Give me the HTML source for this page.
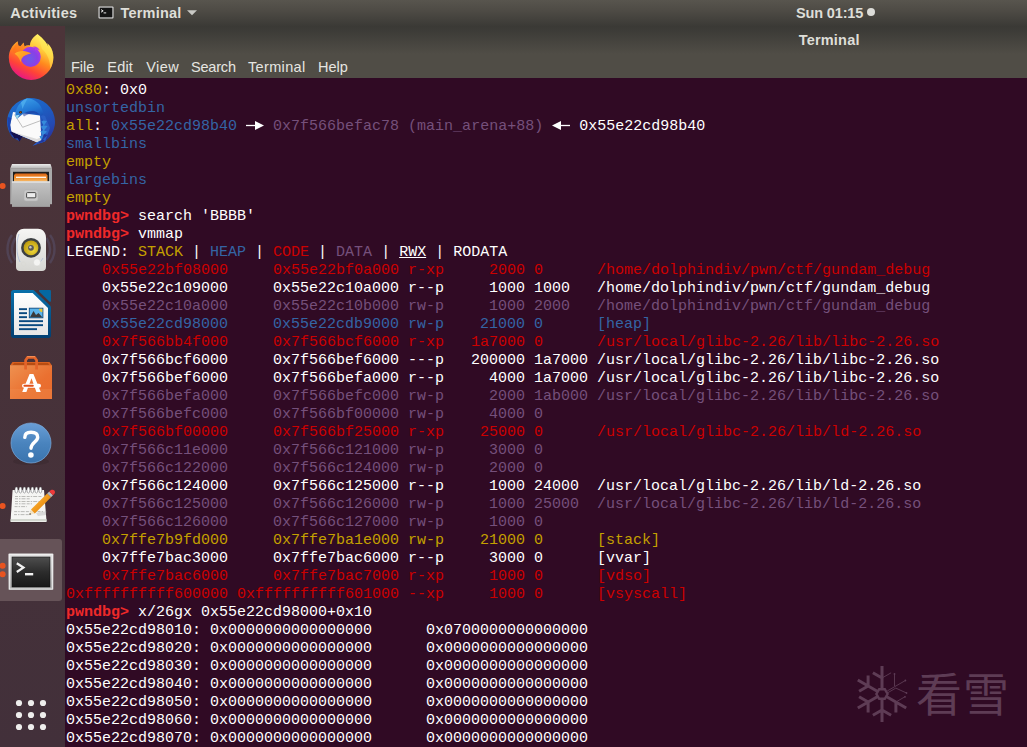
<!DOCTYPE html>
<html lang="en">
<head>
<meta charset="utf-8">
<title>Terminal</title>
<style>
*{box-sizing:border-box;margin:0;padding:0}
html,body{width:1027px;height:747px;overflow:hidden;background:#300a24}
body{position:relative;font-family:"Liberation Sans",sans-serif;color:#eeeeec}
#topbar{position:absolute;left:0;top:0;width:1027px;height:26px;background:linear-gradient(#58554e 0,#4e4b45 40%,#3b3a36 100%);z-index:5}
#topbar span{position:absolute;top:4px;font-weight:bold;font-size:14.5px;line-height:18px;color:#deded8;white-space:nowrap}
#dock{position:absolute;left:0;top:26px;width:65px;height:721px;background:linear-gradient(#4c3439,#42303a);z-index:4;overflow:hidden}
#header{position:absolute;left:65px;top:26px;width:962px;height:52px;background:linear-gradient(#3a3935 0,#3c3b37 4px,#504d46 28px,#504d46 100%)}
#title{position:absolute;left:733.7px;top:5px;letter-spacing:.2px;font-weight:bold;font-size:14.5px;line-height:18px;color:#deded8;white-space:nowrap}
#menu{position:absolute;left:0;top:31px;height:20px;font-size:14.5px;line-height:20px;color:#e6e6e1;white-space:nowrap}
#menu span{position:absolute;top:0}
#term{position:absolute;left:66px;top:82px;width:961px;height:665px;font-family:"Liberation Mono","DejaVu Sans Mono",monospace;font-size:15px;line-height:18px;color:#fff;overflow:hidden}
#term div{height:18px;white-space:pre}
.y{color:#c4a000}.b{color:#3465a4}.p{color:#75507b}.r{color:#cc0000}.w{color:#fff}
.pr{color:#ef2929;font-weight:bold}
.u{text-decoration:underline}
.ar{display:inline-block;width:18px;height:18px;vertical-align:top;position:relative;overflow:hidden}
#wmt{position:absolute;left:916px;top:664.8px;font-family:"Liberation Sans","Noto Sans CJK SC",sans-serif;font-weight:400;font-size:46px;line-height:60px;color:#5e3c55;letter-spacing:1px;white-space:nowrap}
</style>
</head>
<body>
<div id="topbar">
<span id="tA" style="left:10.3px;letter-spacing:.25px">Activities</span>
<svg style="position:absolute;left:98px;top:6px" width="16" height="13" viewBox="0 0 16 13"><rect x=".5" y=".5" width="15" height="12" rx="1" fill="#e2e2e2"/><rect x="1.6" y="1.6" width="12.8" height="9.8" fill="#141414"/><path d="M3 3.6l2.2 1.3L3 6.2" fill="none" stroke="#e8e8e8" stroke-width="1"/><path d="M5.6 6.9h2.6" stroke="#e8e8e8" stroke-width="1"/></svg>
<span id="tT" style="left:120.5px;letter-spacing:.2px">Terminal</span>
<svg style="position:absolute;left:187px;top:10px" width="10" height="6" viewBox="0 0 10 6"><path d="M0 .3h10L5 5.3z" fill="#c9c9c5"/></svg>
<span id="tC" style="left:796px;letter-spacing:-.15px">Sun 01:15</span>
<i style="position:absolute;left:867px;top:8px;width:8.2px;height:8.2px;border-radius:50%;background:#dcdcd8"></i>
</div>
<div id="header">
<div id="title">Terminal</div>
<div id="menu"><span id="m1" style="left:6px">File</span><span id="m2" style="left:42.3px;letter-spacing:.2px">Edit</span><span id="m3" style="left:81.3px;letter-spacing:.4px">View</span><span id="m4" style="left:126px;letter-spacing:-.2px">Search</span><span id="m5" style="left:183px;letter-spacing:.35px">Terminal</span><span id="m6" style="left:253px">Help</span></div>
</div>
<div id="dock">
<svg width="65" height="721" viewBox="0 26 65 721" style="position:absolute;left:0;top:0">
<defs>
<linearGradient id="ffb" x1=".78" y1=".05" x2=".3" y2="1"><stop offset="0" stop-color="#fff36a"/><stop offset=".28" stop-color="#ffc93a"/><stop offset=".5" stop-color="#ff8a1e"/><stop offset=".75" stop-color="#ff4338"/><stop offset="1" stop-color="#e5128c"/></linearGradient>
<radialGradient id="ffg" cx=".45" cy=".6" r=".65"><stop offset="0" stop-color="#6a5be8"/><stop offset=".6" stop-color="#8a3fe6"/><stop offset="1" stop-color="#b03be8"/></radialGradient>
<linearGradient id="ffh" x1="0" y1="0" x2="1" y2=".6"><stop offset="0" stop-color="#ffb62a"/><stop offset="1" stop-color="#ff8a20"/></linearGradient>
<linearGradient id="tb1" x1=".2" y1="0" x2=".75" y2="1"><stop offset="0" stop-color="#1f6fd0"/><stop offset=".4" stop-color="#1d5ec2"/><stop offset=".75" stop-color="#2548b0"/><stop offset="1" stop-color="#2a2f96"/></linearGradient>
<linearGradient id="gr1" x1="0" y1="0" x2="0" y2="1"><stop offset="0" stop-color="#ececec"/><stop offset="1" stop-color="#b4b4b4"/></linearGradient>
<linearGradient id="gr2" x1="0" y1="0" x2="0" y2="1"><stop offset="0" stop-color="#c4c4c4"/><stop offset="1" stop-color="#a2a2a2"/></linearGradient>
<linearGradient id="or1" x1="0" y1="0" x2="0" y2="1"><stop offset="0" stop-color="#d9661a"/><stop offset=".45" stop-color="#f08a28"/><stop offset="1" stop-color="#f7c070"/></linearGradient>
<linearGradient id="sp1" x1="0" y1="0" x2="0" y2="1"><stop offset="0" stop-color="#f6f6f4"/><stop offset="1" stop-color="#d6d6d2"/></linearGradient>
<radialGradient id="sp2" cx=".6" cy=".65" r=".7"><stop offset="0" stop-color="#f2dc3c"/><stop offset="1" stop-color="#b8960c"/></radialGradient>
<linearGradient id="wr1" x1="0" y1="0" x2="0" y2="1"><stop offset="0" stop-color="#0870aa"/><stop offset="1" stop-color="#023f72"/></linearGradient>
<linearGradient id="wr2" x1="0" y1="0" x2="0" y2="1"><stop offset="0" stop-color="#ffffff"/><stop offset="1" stop-color="#e6e6e6"/></linearGradient>
<linearGradient id="bg1" x1="0" y1="0" x2="1" y2="1"><stop offset="0" stop-color="#ee9150"/><stop offset=".6" stop-color="#ea7030"/><stop offset="1" stop-color="#e86a2c"/></linearGradient>
<linearGradient id="hp1" x1="0" y1="0" x2="0" y2="1"><stop offset="0" stop-color="#6a9ed6"/><stop offset=".5" stop-color="#4a84be"/><stop offset="1" stop-color="#3a74ae"/></linearGradient>
<linearGradient id="tm1" x1="0" y1="0" x2="0" y2="1"><stop offset="0" stop-color="#e4e4e4"/><stop offset="1" stop-color="#aeaeae"/></linearGradient>
<linearGradient id="tm2" x1="0" y1="0" x2="0" y2="1"><stop offset="0" stop-color="#4e4e4e"/><stop offset=".5" stop-color="#2c2c2c"/><stop offset="1" stop-color="#181818"/></linearGradient>
<linearGradient id="pn1" x1="0" y1="0" x2="1" y2="1"><stop offset="0" stop-color="#f8c050"/><stop offset=".5" stop-color="#f29a1c"/><stop offset="1" stop-color="#c8740c"/></linearGradient>
<linearGradient id="tb2" x1=".3" y1="0" x2=".7" y2="1"><stop offset="0" stop-color="#3a9ce8"/><stop offset=".55" stop-color="#2278d4"/><stop offset="1" stop-color="#1a4eb4"/></linearGradient>
</defs>
<!-- firefox -->
<g transform="translate(0,26)">
<path d="M17.7 15.2C12 19 8.8 25 8.8 31.6A22.3 22.3 0 0 0 53.4 31.6C53.4 27 52 22.5 49.5 19.5L47.3 17.2 48.3 21C46 15 41 11 37.5 8 33 11 30 15 30 19.5 28 19 26 19.5 24.5 20.5L23.6 16.6 20.5 20.3 18.3 19.5Z" fill="url(#ffb)"/>
<path d="M12.5 25C13.5 21 15.5 18 17.8 16L18.4 19.5 20.5 20.3 23.6 17 24.5 20.5C26.5 19.6 28.5 19.4 30 19.6L27 24.5 15 28Z" fill="#ff6f1c" opacity=".55"/>
<path d="M37.5 8C41 11 46 15 48.3 21L47.3 17.2 49.5 19.5C52 22.5 53.4 27 53.4 31.6 53.4 36 52 40 50 43 50.5 36 48 28 42 23 40 17 38.5 12 37.5 8Z" fill="#fff15a" opacity=".45"/>
<circle cx="30.7" cy="30.8" r="10.1" fill="url(#ffg)"/>
<path d="M14.6 27.8C17 25.6 21 24.6 25 25.2 28 25.6 29.5 26.6 31 27.4 27 28 23.5 29.5 21.8 32.5 21 34 21 35.5 21.3 36.5 19.5 34.5 19.5 31 14.6 27.8Z" fill="url(#ffh)"/>
<path d="M33 20.6C36 20 39 22 39.8 24.6 38 23.2 36.3 23.4 35.2 24.4 35.3 22.6 34.5 21.3 33 20.6Z" fill="#b43ce6"/>
</g>
<!-- thunderbird -->
<g transform="translate(0,90)">
<path d="M19.5 51.2L12.5 47.3A24 24 0 1 1 45 51.5L32.5 55.8 37 52.3 22 46.8Z" fill="url(#tb1)"/>
<path d="M11.5 41L22.5 46.6 19.5 51.4 17.6 48.3 14.5 48.6 12.3 45 9.6 42.5Z" fill="#141250"/>
<path d="M13 22L40 25.5 41.5 50.3 37 52.2 11.3 41.4 10.2 35Z" fill="#fafafa"/>
<path d="M11.3 41.4L37 52.2 41.5 50.3 41.3 47 37 49Z" fill="#dcdcdc"/>
<path d="M14.5 24.5L22.6 37.3 40.2 30.8" fill="none" stroke="#a2a2a2" stroke-width=".7"/>
<path d="M39 24L45 26 50 38 45 51.5 32.5 55.8 37 52.3 41.5 50 39.6 46.2 42.6 45.2 40.4 41.6 43.2 40.2 41 36.6 43.6 35.2 41.4 31.6 43.4 30.2Z" fill="#2960c6"/>
<path d="M43.6 30.4L47 31 44 35.4 47.6 36 44 40.4 47 41.6 43 45.4 45.4 47 41.8 50.2 39.6 46.2 42.6 45.2 40.4 41.6 43.2 40.2 41 36.6 43.6 35.2 41.4 31.6Z" fill="#3b9ae2" opacity=".75"/>
<path d="M44 44L47.5 45 43 49.5 45 51 36 54.6 41.5 50.2Z" fill="#1e2c92" opacity=".8"/><path d="M7.6 27C7 33 8 40 12.5 47.3L11.3 41.4 10.2 35 11.5 28Z" fill="#1a2f9c" opacity=".6"/>
<path d="M15.4 25.8C15 20 19 11.5 27 8.2 34 8.6 41 13 43 22 44 25 42 26.5 40 25.5 36.5 19.5 29 20 22.5 24.3L17 28.8Z" fill="url(#tb2)"/>
<path d="M21 12.5C23 10 25.5 8.8 27.5 8.4 26 11 24 15 22.5 19 22 16.5 21.5 14.5 21 12.5Z" fill="#54b4f0" opacity=".7"/>
<path d="M22.5 24.3C29 20 36.5 19.5 40 25.5 36 22.5 29 23 24 26.5Z" fill="#1c3a9c" opacity=".55"/>
<path d="M15.3 25.6L19.6 24.8 17 28.9Z" fill="#9adcee"/>
<circle cx="20.6" cy="22.2" r="1.3" fill="#3a200c"/><circle cx="20.6" cy="22.2" r=".6" fill="#c06a1c"/>
</g>
<!-- files -->
<g transform="translate(0,154)">
<path d="M12 10H50.5L52 14.5H10.2Z" fill="url(#gr1)"/>
<rect x="10.2" y="14.2" width="41.8" height="36" fill="#aaa"/>
<rect x="13" y="17.8" width="36" height="10" fill="#1c1c1c"/>
<path d="M15.5 19.5H46L47.5 21.5V28H14V21Z" fill="url(#or1)"/>
<rect x="16" y="22.7" width="30" height="1.2" fill="#fff"/>
<rect x="12" y="27.4" width="38" height="25.5" fill="url(#gr2)"/>
<rect x="12" y="27.4" width="38" height="1.3" fill="#e6e6e6"/>
<rect x="24" y="36" width="14" height="11" rx="2" fill="#c9c9c9" stroke="#b2b2b2" stroke-width=".6"/>
<rect x="26.6" y="38.6" width="9.2" height="5.2" rx=".8" fill="#ececec" stroke="#484848" stroke-width="1"/>
<circle cx="2.6" cy="32" r="3" fill="#e95420"/>
</g>
<!-- rhythmbox -->
<g transform="translate(0,218)">
<g fill="none" stroke="#6d7db4" stroke-width="2.4" opacity=".22">
<path d="M12 17C6 25 6 37 12 45"/><path d="M15.5 20C11 27 11 35 15.5 42"/>
<path d="M50 17C56 25 56 37 50 45"/><path d="M46.5 20C51 27 51 35 46.5 42"/>
</g>
<path d="M16 20C16 14 20 10.8 24 10.8H38C42 10.8 46 14 46 20V49C46 51.5 44.5 53 42 53H20C17.5 53 16 51.5 16 49Z" fill="url(#sp1)"/>
<path d="M19 16C16 24 16 36 20 44" fill="none" stroke="#9ab0d8" stroke-width="1" opacity=".6"/>
<path d="M43 40C41 44 38 46 36 47" fill="none" stroke="#9ab0d8" stroke-width="1" opacity=".6"/>
<circle cx="31" cy="29.8" r="9.9" fill="#3c4042"/>
<circle cx="31" cy="29.8" r="7.4" fill="url(#sp2)"/>
<circle cx="31" cy="29.8" r="2.9" fill="#5a5a5a"/><circle cx="30.4" cy="29.2" r="1.2" fill="#c8c8c8"/>
<circle cx="37" cy="44.4" r="3.6" fill="#f4f4f2" stroke="#d0d0cc" stroke-width=".5"/>
<circle cx="23.5" cy="46" r="2.2" fill="none" stroke="#d8d8d4" stroke-width=".6"/>
</g>
<!-- writer -->
<g transform="translate(0,282)">
<path d="M13.5 8H32.5C33.5 8 34 8.3 34.7 9L50 23.5C50.8 24.3 51 25 51 26V53.5C51 55 50 56 48.5 56H13.5C12 56 11 55 11 53.5V10.5C11 9 12 8 13.5 8Z" fill="url(#wr1)"/>
<path d="M40 8.1H49.8C50.5 8.1 50.9 8.5 50.9 9.2V18.8C50.9 20 50 20.2 49.3 19.5L39.3 9.8C38.6 9 38.9 8.1 40 8.1Z" fill="#0568a2"/>
<path d="M14 11H32.6L48 26V53H14Z" fill="url(#wr2)"/>
<g fill="#0a4a80"><rect x="19" y="26.2" width="8" height="1.9"/><rect x="19" y="30.2" width="8" height="1.9"/><rect x="19" y="34.2" width="8" height="1.9"/><rect x="19" y="38.2" width="24" height="1.9"/><rect x="19" y="42.2" width="24" height="1.9"/><rect x="19" y="46.2" width="18" height="1.9"/></g>
<rect x="29.3" y="26.2" width="13.6" height="9.6" fill="#5cb4ea" stroke="#0a4a80" stroke-width=".9"/>
<path d="M30 35.3L33.5 29 36 33 38.5 31 42.3 35.3Z" fill="#3a3a3a"/>
<path d="M39 26.7H42.4V30.2C40.5 30 39.2 28.6 39 26.7Z" fill="#e8c430"/>
</g>
<!-- software -->
<g transform="translate(0,346)">
<path d="M12.5 16H49.5L52 19.5H10Z" fill="#d9601e"/>
<path d="M14 17H48L49.5 19.5H12.5Z" fill="#b84c12"/>
<rect x="10" y="19.2" width="42" height="33.8" fill="url(#bg1)"/>
<rect x="10" y="43" width="42" height="10" fill="#f09050" opacity=".35"/>
<path d="M25.6 23.6V14.2L27.6 11.4H34.6L36.6 14.2V23.6" fill="none" stroke="#e4642a" stroke-width="2.7" stroke-linejoin="round"/>
<path d="M27.2 10.6H35" stroke="#f29058" stroke-width="1"/>
<path d="M29.6 28H33.4L40.8 46H36.4L31.5 32.2 26.4 46H22.2Z" fill="#fff"/>
<rect x="22" y="37.8" width="19" height="4" rx="2" fill="#fff"/>
<rect x="23.4" y="38.8" width="10.4" height="2" rx="1" fill="#e2501a"/>
</g>
<!-- help -->
<g transform="translate(0,410)">
<ellipse cx="31" cy="51.5" rx="18" ry="3.4" fill="#2a1a20" opacity=".22"/>
<circle cx="31" cy="33" r="20" fill="url(#hp1)" stroke="#7aa8d8" stroke-width=".7"/>
<path d="M24.8 27.4C24.8 23.6 27.5 22.3 31 22.3 35 22.3 37.7 24 37.7 27.2 37.7 31.6 31.3 32.6 31 38.2" fill="none" stroke="#fff" stroke-width="3.4" stroke-linecap="round"/>
<circle cx="30.9" cy="45" r="2.8" fill="#fff"/>
</g>
<!-- gedit -->
<g transform="translate(0,474)">
<path d="M10 47.6H46.8V48.6H10Z" fill="#2a1a20" opacity=".4"/>
<path d="M12.6 16H44L46.6 48H10.5Z" fill="#f5f5f3"/>
<path d="M10.7 45L46.4 45 46.6 47.2H10.6Z" fill="#d3d7cf"/>
<g stroke="#b4b4b0" stroke-width=".9" stroke-dasharray="3 1 1.5 1 4 1.2"><path d="M15 22.5H42"/><path d="M15 24.8H30"/><path d="M15 27.5H40"/><path d="M15 29.8H32"/><path d="M14.6 32.6H27"/><path d="M14.2 37.6H43"/><path d="M14 40.6H29"/></g>
<g fill="#fff" stroke="#55575a" stroke-width=".5"><ellipse cx="16.4" cy="16" rx="1.5" ry="3"/><ellipse cx="20.4" cy="16" rx="1.5" ry="3"/><ellipse cx="24.4" cy="16" rx="1.5" ry="3"/><ellipse cx="28.4" cy="16" rx="1.5" ry="3"/><ellipse cx="32.4" cy="16" rx="1.5" ry="3"/><ellipse cx="36.4" cy="16" rx="1.5" ry="3"/><ellipse cx="40.4" cy="16" rx="1.5" ry="3"/></g>
<path d="M36 39L47 37 46 41 38 42Z" fill="#888" opacity=".25"/>
<path d="M29.3 40.8L31 35.6 34.8 39.6Z" fill="#f4e4c4"/>
<path d="M29.3 40.8L29.9 39 31.2 40.3Z" fill="#222"/>
<path d="M31 35.6L47.2 19.4 51 23.2 34.8 39.6Z" fill="url(#pn1)"/>
<path d="M47.2 19.4L49.2 17.4 53 21.2 51 23.2Z" fill="#b8b8b8"/>
<path d="M49.2 17.4C51 15.2 53.3 15.3 54.4 16.6 55.6 18 55 20 53 21.2Z" fill="#ef3a3a"/>
<circle cx="2.6" cy="32" r="3" fill="#e95420"/>
</g>
<!-- terminal -->
<g transform="translate(0,536)">
<path d="M0 3H59A3 3 0 0 1 62 6V62A3 3 0 0 1 59 65H0Z" fill="#665358"/>
<rect x="8.4" y="17.5" width="45" height="36.5" rx="1" fill="url(#tm1)"/>
<rect x="9.4" y="18.5" width="43" height="34.5" fill="none" stroke="#f2f2f2" stroke-width=".8"/>
<rect x="12" y="21" width="38" height="30" fill="url(#tm2)" stroke="#111" stroke-width=".6"/>
<path d="M16.8 27.2L23.4 31.6 16.8 36" fill="none" stroke="#f2f2f2" stroke-width="2.3"/>
<rect x="25" y="37" width="8.2" height="2.4" fill="#f2f2f2"/>
<circle cx="2.6" cy="29.8" r="3" fill="#e95420"/><circle cx="2.6" cy="38.2" r="3" fill="#e95420"/>
</g>
<!-- apps -->
<g fill="#eeeeec">
<circle cx="19" cy="703" r="3.1"/><circle cx="31" cy="703" r="3.1"/><circle cx="43" cy="703" r="3.1"/>
<circle cx="19" cy="715" r="3.1"/><circle cx="31" cy="715" r="3.1"/><circle cx="43" cy="715" r="3.1"/>
<circle cx="19" cy="727" r="3.1"/><circle cx="31" cy="727" r="3.1"/><circle cx="43" cy="727" r="3.1"/>
</g>
</svg>
</div>
<div id="term">
<div><span class="y">0x80</span>: 0x0</div>
<div class="b">unsortedbin</div>
<div><span class="y">all</span>: <span class="b">0x55e22cd98b40</span> <span class="ar"><svg width="18" height="18" viewBox="0 0 18 18"><path d="M0 7.5h9.5" stroke="#fff" stroke-width="1.3"/><path d="M9 3l9 4.5-9 4.5z" fill="#fff"/></svg></span> <span class="p">0x7f566befac78 (main_arena+88)</span> <span class="ar"><svg width="18" height="18" viewBox="0 0 18 18"><path d="M8.5 7.5h9.5" stroke="#fff" stroke-width="1.3"/><path d="M9 3l-9 4.5 9 4.5z" fill="#fff"/></svg></span> 0x55e22cd98b40</div>
<div class="b">smallbins</div>
<div class="y">empty</div>
<div class="b">largebins</div>
<div class="y">empty</div>
<div><span class="pr">pwndbg&gt;</span> search 'BBBB'</div>
<div><span class="pr">pwndbg&gt;</span> vmmap</div>
<div>LEGEND: <span class="y">STACK</span> | <span class="b">HEAP</span> | <span class="r">CODE</span> | <span class="p">DATA</span> | <span class="u">RWX</span> | RODATA</div>
<div class="r">    0x55e22bf08000     0x55e22bf0a000 r-xp     2000 0      /home/dolphindiv/pwn/ctf/gundam_debug</div>
<div class="w">    0x55e22c109000     0x55e22c10a000 r--p     1000 1000   /home/dolphindiv/pwn/ctf/gundam_debug</div>
<div class="p">    0x55e22c10a000     0x55e22c10b000 rw-p     1000 2000   /home/dolphindiv/pwn/ctf/gundam_debug</div>
<div class="b">    0x55e22cd98000     0x55e22cdb9000 rw-p    21000 0      [heap]</div>
<div class="r">    0x7f566bb4f000     0x7f566bcf6000 r-xp   1a7000 0      /usr/local/glibc-2.26/lib/libc-2.26.so</div>
<div class="w">    0x7f566bcf6000     0x7f566bef6000 ---p   200000 1a7000 /usr/local/glibc-2.26/lib/libc-2.26.so</div>
<div class="w">    0x7f566bef6000     0x7f566befa000 r--p     4000 1a7000 /usr/local/glibc-2.26/lib/libc-2.26.so</div>
<div class="p">    0x7f566befa000     0x7f566befc000 rw-p     2000 1ab000 /usr/local/glibc-2.26/lib/libc-2.26.so</div>
<div class="p">    0x7f566befc000     0x7f566bf00000 rw-p     4000 0</div>
<div class="r">    0x7f566bf00000     0x7f566bf25000 r-xp    25000 0      /usr/local/glibc-2.26/lib/ld-2.26.so</div>
<div class="p">    0x7f566c11e000     0x7f566c121000 rw-p     3000 0</div>
<div class="p">    0x7f566c122000     0x7f566c124000 rw-p     2000 0</div>
<div class="w">    0x7f566c124000     0x7f566c125000 r--p     1000 24000  /usr/local/glibc-2.26/lib/ld-2.26.so</div>
<div class="p">    0x7f566c125000     0x7f566c126000 rw-p     1000 25000  /usr/local/glibc-2.26/lib/ld-2.26.so</div>
<div class="p">    0x7f566c126000     0x7f566c127000 rw-p     1000 0</div>
<div class="y">    0x7ffe7b9fd000     0x7ffe7ba1e000 rw-p    21000 0      [stack]</div>
<div class="w">    0x7ffe7bac3000     0x7ffe7bac6000 r--p     3000 0      [vvar]</div>
<div class="r">    0x7ffe7bac6000     0x7ffe7bac7000 r-xp     1000 0      [vdso]</div>
<div class="r">0xffffffffff600000 0xffffffffff601000 --xp     1000 0      [vsyscall]</div>
<div><span class="pr">pwndbg&gt;</span> x/26gx 0x55e22cd98000+0x10</div>
<div>0x55e22cd98010: 0x0000000000000000      0x0700000000000000</div>
<div>0x55e22cd98020: 0x0000000000000000      0x0000000000000000</div>
<div>0x55e22cd98030: 0x0000000000000000      0x0000000000000000</div>
<div>0x55e22cd98040: 0x0000000000000000      0x0000000000000000</div>
<div>0x55e22cd98050: 0x0000000000000000      0x0000000000000000</div>
<div>0x55e22cd98060: 0x0000000000000000      0x0000000000000000</div>
<div>0x55e22cd98070: 0x0000000000000000      0x0000000000000000</div>
</div>
<div id="wm"><svg width="66" height="66" viewBox="-33 -33 66 66" style="position:absolute;left:849px;top:660.5px"><g fill="none" stroke="#5e3c55"><path d="M0.0 -5.0 L0.0 -28.0 M0.0 -16.0 L-9.1 -21.2 M0.0 5.0 L0.0 28.0 M0.0 16.0 L9.1 21.2 M0.0 16.0 L-9.1 21.2 M-4.3 -2.5 L-24.2 -14.0 M-13.9 -8.0 L-22.9 -2.7 M-13.9 -8.0 L-13.9 -18.5 M-4.3 2.5 L-24.2 14.0 M-13.9 8.0 L-13.9 18.5 M-13.9 8.0 L-22.9 2.7 M4.3 2.5 L24.2 14.0 M13.9 8.0 L13.9 18.5" stroke-width="3"/><path d="M5.2 -3.0 L23.4 -13.5 M6.0 -1.4 L13.8 -5.9 M13.8 -5.9 L24.5 -1.0 M0.0 -16.0 L9.1 -21.2 M12.5 -8 L12.5 -20 M13.9 8.0 L22.9 2.8" stroke-width=".9"/><polygon points="5.6,0.0 2.8,4.8 -2.8,4.8 -5.6,0.0 -2.8,-4.8 2.8,-4.8" stroke-width="2.4"/></g><g fill="#5e3c55"><circle cx="12.5" cy="-20" r=".9"/><circle cx="24.5" cy="-1" r=".9"/><circle cx="23.4" cy="-13.5" r=".9"/><circle cx="23" cy="2.8" r=".9"/></g></svg><span id="wmt">看雪</span></div>
</body>
</html>
